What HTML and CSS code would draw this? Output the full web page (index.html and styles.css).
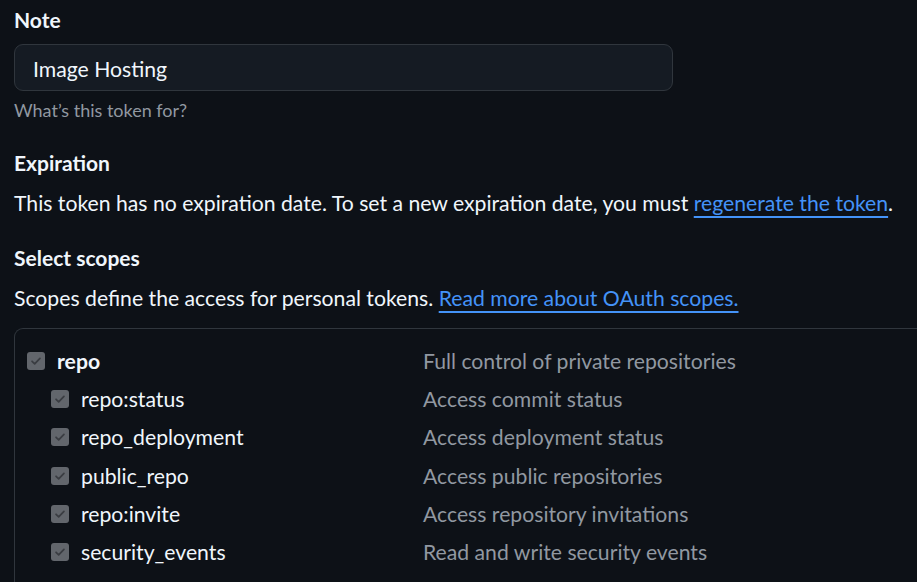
FILE: index.html
```html
<!DOCTYPE html>
<html lang="en">
<head>
<meta charset="utf-8">
<title>Personal access token</title>
<link rel="stylesheet" href="styles.css">
</head>
<body>
<div class="page">
  <label class="heading note-label" for="note">Note</label>
  <div class="input">Image Hosting</div>
  <p class="hint">What’s this token for?</p>

  <h3 class="heading section">Expiration</h3>
  <p class="text">This token has no expiration date. To set a new expiration date, you must <a href="#" class="link">regenerate the token</a>.</p>

  <h3 class="heading section">Select scopes</h3>
  <p class="text">Scopes define the access for personal tokens. <a href="#" class="link">Read more about OAuth scopes.</a></p>

  <div class="scopes">
    <div class="group">
      <div class="row">
        <div class="name"><span class="check"><svg viewBox="0 0 16 16" width="14" height="14"><path d="M3.5 8.3l3 3 6-6.3" fill="none" stroke="currentColor" stroke-width="2" stroke-linecap="round" stroke-linejoin="round"/></svg></span><strong>repo</strong></div>
        <div class="desc">Full control of private repositories</div>
      </div>
      <div class="row sub">
        <div class="name"><span class="check"><svg viewBox="0 0 16 16" width="14" height="14"><path d="M3.5 8.3l3 3 6-6.3" fill="none" stroke="currentColor" stroke-width="2" stroke-linecap="round" stroke-linejoin="round"/></svg></span>repo:status</div>
        <div class="desc">Access commit status</div>
      </div>
      <div class="row sub">
        <div class="name"><span class="check"><svg viewBox="0 0 16 16" width="14" height="14"><path d="M3.5 8.3l3 3 6-6.3" fill="none" stroke="currentColor" stroke-width="2" stroke-linecap="round" stroke-linejoin="round"/></svg></span>repo_deployment</div>
        <div class="desc">Access deployment status</div>
      </div>
      <div class="row sub">
        <div class="name"><span class="check"><svg viewBox="0 0 16 16" width="14" height="14"><path d="M3.5 8.3l3 3 6-6.3" fill="none" stroke="currentColor" stroke-width="2" stroke-linecap="round" stroke-linejoin="round"/></svg></span>public_repo</div>
        <div class="desc">Access public repositories</div>
      </div>
      <div class="row sub">
        <div class="name"><span class="check"><svg viewBox="0 0 16 16" width="14" height="14"><path d="M3.5 8.3l3 3 6-6.3" fill="none" stroke="currentColor" stroke-width="2" stroke-linecap="round" stroke-linejoin="round"/></svg></span>repo:invite</div>
        <div class="desc">Access repository invitations</div>
      </div>
      <div class="row sub">
        <div class="name"><span class="check"><svg viewBox="0 0 16 16" width="14" height="14"><path d="M3.5 8.3l3 3 6-6.3" fill="none" stroke="currentColor" stroke-width="2" stroke-linecap="round" stroke-linejoin="round"/></svg></span>security_events</div>
        <div class="desc">Read and write security events</div>
      </div>
    </div>
  </div>
</div>
</body>
</html>
```

FILE: styles.css
```css
html, body {
  margin: 0;
  padding: 0;
  background: #0d1117;
  overflow: hidden;
}

body {
  font-family: "Lato", "Open Sans", "Liberation Sans", sans-serif;
  font-size: 21.2px;
  color: #f0f6fc;
}

.page {
  padding: 5px 0 0 14px;
  width: 940px;
}

.heading {
  display: block;
  margin: 0;
  font-size: 21px;
  font-weight: 700;
  line-height: 30px;
}

.input {
  margin-top: 9px;
  width: 659px;
  height: 47px;
  box-sizing: border-box;
  border: 1px solid #30363d;
  border-radius: 9px;
  background: #151b23;
  padding: 2px 18px 0;
  display: flex;
  align-items: center;
  font-size: 21.2px;
}

.hint {
  margin: 6px 0 0;
  line-height: 27px;
  font-size: 18px;
  color: #9198a1;
}

.section {
  margin-top: 24px;
}

.text {
  margin: 10px 0 0;
  line-height: 30px;
}

.text + .section {
  margin-top: 25px;
}

.link {
  color: #4493f8;
  text-decoration: underline;
  text-decoration-thickness: 2px;
  text-underline-offset: 5px;
}

.scopes {
  margin-top: 15px;
  border: 1px solid #30363d;
  border-radius: 9px 0 0 0;
  border-right: none;
  border-bottom: none;
}

.group {
  padding: 13px 0 11px;
  border-bottom: 1px solid #30363d;
}

.row {
  display: grid;
  grid-template-columns: 408px 1fr;
  align-items: center;
  height: 38.2px;
}

.name {
  display: flex;
  align-items: center;
  gap: 12px;
  padding-left: 12px;
}

.sub .name {
  padding-left: 36px;
}

.name strong {
  font-weight: 700;
}

.check {
  width: 18px;
  height: 18px;
  border-radius: 3px;
  background: #62666c;
  color: #3a3d42;
  display: flex;
  align-items: center;
  justify-content: center;
  flex: none;
}

.desc {
  color: #9198a1;
}
```
